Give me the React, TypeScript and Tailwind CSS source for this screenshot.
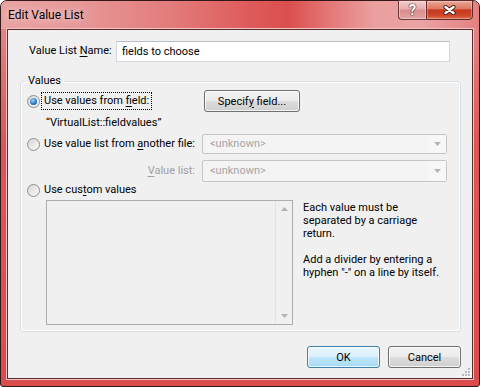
import clsx from "clsx";

function Radio({ checked = false }: { checked?: boolean }) {
  return (
    <span className="grid h-[13px] w-[13px] shrink-0 place-items-center rounded-full border border-[#8e8f8f] bg-[linear-gradient(135deg,#d6d6d6,#fbfbfb)]">
      {checked && (
        <span className="h-[7px] w-[7px] rounded-full bg-[radial-gradient(circle_at_40%_35%,#9fdcff_0%,#2a7bc4_55%,#0f3e6e_100%)]" />
      )}
    </span>
  );
}

function Arrow({ up = false }: { up?: boolean }) {
  return (
    <svg width="7" height="4" viewBox="0 0 7 4">
      <path d={up ? "M0 4 L3.5 0 L7 4 Z" : "M0 0 L7 0 L3.5 4 Z"} fill="#b4b4b4" />
    </svg>
  );
}

function Combo({ className }: { className: string }) {
  return (
    <div className={clsx("flex rounded-[2px] border border-[#c6c6c6] bg-[#f4f4f4]", className)}>
      <span className="flex-1 self-center truncate pl-[7px] text-[#a6a6a6]">&lt;unknown&gt;</span>
      <span className="grid w-[18px] place-items-center bg-[#f7f7f7]">
        <Arrow />
      </span>
    </div>
  );
}

function Btn({ children, primary = false, className }: { children: React.ReactNode; primary?: boolean; className?: string }) {
  return (
    <button
      type="button"
      className={clsx(
        "grid place-items-center rounded-[3px] border leading-none text-black shadow-[inset_0_0_0_1px_rgba(255,255,255,0.75)]",
        primary
          ? "border-[#3c7fb1] bg-[linear-gradient(180deg,#eaf6fd_0%,#d9f0fc_50%,#bee6fd_50%,#a7d9f5_100%)]"
          : "border-[#707070] bg-[linear-gradient(180deg,#f2f2f2_0%,#ebebeb_50%,#dddddd_50%,#cfcfcf_100%)]",
        className,
      )}
    >
      {children}
    </button>
  );
}

export default function App() {
  return (
    <div className="h-[387px] w-[480px] overflow-hidden bg-white font-[family-name:Roboto,'Noto_Sans',sans-serif] text-[11px] text-black">
      <div className="flex h-full flex-col rounded-t-[7px] rounded-b-[3px] border border-[#321818] bg-[linear-gradient(180deg,#e68e8e_0px,#dc5656_140px,#da4c4c_100%)]">
        {/* Title bar */}
        <div className="flex h-[28px] shrink-0 items-start justify-between rounded-t-[6px] bg-[linear-gradient(90deg,#e9a3a3_0%,#e79a9a_15%,#e37c7c_35%,#df5b5b_52%,#db4e4e_60%,#e47474_68%,#eb9f9f_78%,#eaa3a3_88%,#e58080_100%)] pl-[7px] pr-[6px]">
          <div className="pt-[6px] text-[12px] leading-[16px] [text-shadow:0_0_6px_rgba(255,255,255,0.9)]">
            Edit Value List
          </div>
          <div className="-mt-px flex h-[20px]">
            <div className="grid w-[28px] place-items-center rounded-bl-[4px] border border-r-0 border-[#6a3a3a] bg-[linear-gradient(180deg,#f3cccc_0%,#e8acac_45%,#d98c8c_50%,#e3a3a3_100%)] shadow-[inset_0_0_0_1px_rgba(255,255,255,0.35)]">
              <span className="text-[15px] font-bold leading-none text-white [text-shadow:0_0_1px_#3a2020,0_0_1px_#3a2020,0_0_1px_#3a2020]">
                ?
              </span>
            </div>
            <div className="grid w-[47px] place-items-center rounded-br-[4px] border border-[#5c2a2a] bg-[linear-gradient(180deg,#eba898_0%,#dc7a63_42%,#c6381d_50%,#cf4629_80%,#e0704f_100%)] shadow-[inset_0_0_0_1px_rgba(255,255,255,0.3)]">
              <svg width="13" height="10" viewBox="0 0 13 10">
                <path d="M2.5 2 L10.5 8 M10.5 2 L2.5 8" stroke="#4a1a12" strokeWidth="4.2" strokeLinecap="round" />
                <path d="M2.5 2 L10.5 8 M10.5 2 L2.5 8" stroke="#ffffff" strokeWidth="2.4" strokeLinecap="round" />
              </svg>
            </div>
          </div>
        </div>

        {/* Client area */}
        <div className="flex flex-1 px-[6px] pb-[7px]">
          <div className="relative flex flex-1 flex-col border border-[#5a2c2c] bg-[#f0f0f0] shadow-[0_0_0_1px_#f3c2c2]">
            {/* Name row */}
            <div className="mt-[11px] flex h-[21px] items-center pl-[21px]">
              <span className="w-[87px]">
                Value List <u className="underline-offset-2">N</u>ame:
              </span>
              <input
                readOnly
                value="fields to choose"
                className="h-[21px] w-[334px] border border-[#d3d7dd] border-t-[#b9bdc4] bg-white px-[5px] outline-none"
              />
            </div>

            {/* Values group */}
            <fieldset className="ml-[12px] mt-[11px] w-[441px] rounded-[3px] border border-[#d5dfe5] pb-[6px] shadow-[inset_0_0_0_1px_#fff]">
              <legend className="ml-[4px] px-[3px] leading-[16px]">Values</legend>

              <div className="mt-[1px] flex h-[22px] items-center">
                <div className="flex w-[183px] items-center pl-[6px]">
                  <Radio checked />
                  <span className="ml-px border border-dotted border-black px-[2px] leading-[16px]">
                    Use values from <u className="underline-offset-2">f</u>ield:
                  </span>
                </div>
                <Btn className="h-[22px] w-[96px]">
                  <span>
                    Specif<u className="underline-offset-2">y</u> field...
                  </span>
                </Btn>
              </div>

              <div className="mt-[3px] h-[16px] pl-[25px] leading-[16px]">“VirtualList::fieldvalues”</div>

              <div className="mt-[3px] flex h-[20px] items-center">
                <div className="flex w-[181px] items-center gap-[4px] pl-[6px]">
                  <Radio />
                  <span>
                    Use value list from <u className="underline-offset-2">a</u>nother file:
                  </span>
                </div>
                <Combo className="h-[20px] w-[245px]" />
              </div>

              <div className="mt-[6px] flex h-[22px] items-center">
                <span className="w-[181px] pr-[7px] text-right text-[#a0a0a0]">
                  <u className="underline-offset-2">V</u>alue list:
                </span>
                <Combo className="h-[22px] w-[245px]" />
              </div>

              <div className="mt-[1px] flex h-[14px] items-center gap-[4px] pl-[6px]">
                <Radio />
                <span className="leading-[14px]">
                  Use cus<u className="underline-offset-2">t</u>om values
                </span>
              </div>

              <div className="mt-[3px] flex">
                <div className="ml-[25px] flex h-[125px] w-[247px] justify-end border border-[#adadad] bg-[#f0f0f0]">
                  <div className="flex w-[17px] flex-col items-center justify-between border-l border-[#e2e2e2] py-[6px]">
                    <Arrow up />
                    <Arrow />
                  </div>
                </div>
                <div className="ml-[10px] leading-[13px]">
                  <p className="mt-px">
                    Each value must be
                    <br />
                    separated by a carriage
                    <br />
                    return.
                  </p>
                  <p className="mt-[13px]">
                    Add a divider by entering a
                    <br />
                    hyphen "-" on a line by itself.
                  </p>
                </div>
              </div>
            </fieldset>

            {/* Buttons */}
            <div className="mt-[14px] flex justify-end gap-[8px] pr-[11px]">
              <Btn primary className="h-[22px] w-[73px]">
                OK
              </Btn>
              <Btn className="h-[22px] w-[73px]">Cancel</Btn>
            </div>

            {/* Size grip */}
            <svg className="absolute bottom-px right-px" width="9" height="9" viewBox="0 0 9 9">
              {[
                [6, 0],
                [6, 3],
                [3, 3],
                [6, 6],
                [3, 6],
                [0, 6],
              ].map(([x, y]) => (
                <g key={`${x}-${y}`}>
                  <rect x={x + 1} y={y + 1} width="2" height="2" fill="#ffffff" />
                  <rect x={x} y={y} width="2" height="2" fill="#b8b8b8" />
                </g>
              ))}
            </svg>
          </div>
        </div>
      </div>
    </div>
  );
}
